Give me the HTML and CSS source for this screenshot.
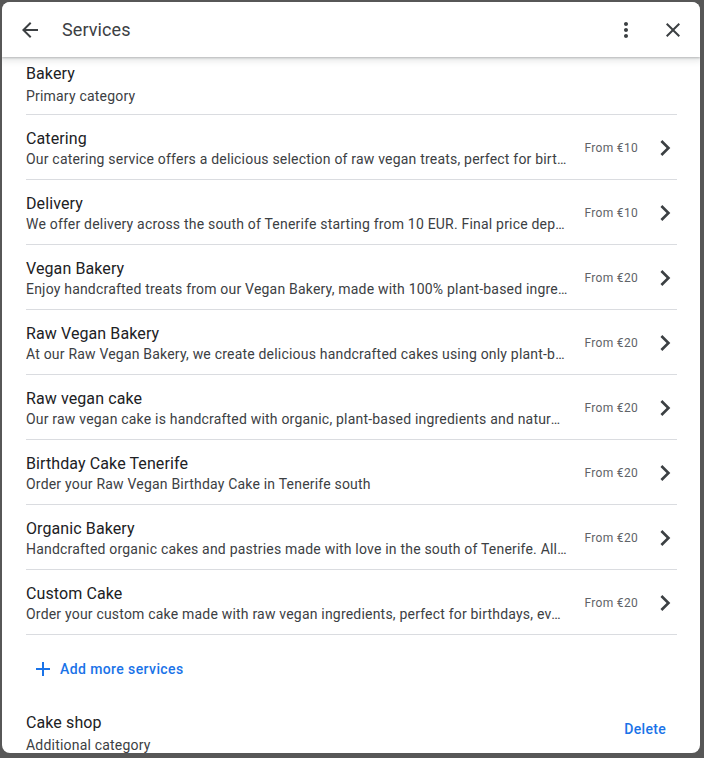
FILE: index.html
```html
<!DOCTYPE html>
<html lang="en">
<head>
<meta charset="utf-8">
<title>Services</title>
<link rel="stylesheet" href="styles.css">
</head>
<body>
<div class="dialog">
  <header class="header">
    <button class="icon-btn back" aria-label="Back">
      <svg viewBox="0 0 24 24" width="24" height="24"><path d="M20 11H7.83l5.59-5.59L12 4l-8 8 8 8 1.41-1.41L7.83 13H20v-2z"/></svg>
    </button>
    <h1 class="title">Services</h1>
    <div class="spacer"></div>
    <button class="icon-btn" aria-label="More">
      <svg viewBox="0 0 24 24" width="24" height="24"><path d="M12 8c1.1 0 2-.9 2-2s-.9-2-2-2-2 .9-2 2 .9 2 2 2zm0 2c-1.1 0-2 .9-2 2s.9 2 2 2 2-.9 2-2-.9-2-2-2zm0 6c-1.1 0-2 .9-2 2s.9 2 2 2 2-.9 2-2-.9-2-2-2z"/></svg>
    </button>
    <button class="icon-btn close" aria-label="Close">
      <svg viewBox="0 0 24 24" width="24" height="24"><path d="M19 6.41L17.59 5 12 10.59 6.41 5 5 6.41 10.59 12 5 17.59 6.41 19 12 13.41 17.59 19 19 17.59 13.41 12z"/></svg>
    </button>
  </header>

  <main class="content">
    <section class="category">
      <div class="cat-name">Bakery</div>
      <div class="cat-type">Primary category</div>
    </section>

    <ul class="services">
      <li class="service">
        <div class="svc-text">
          <div class="svc-name">Catering</div>
          <div class="svc-desc">Our catering service offers a delicious selection of raw vegan treats, perfect for birthdays, weddings and corporate events.</div>
        </div>
        <div class="svc-price">From €10</div>
        <svg class="chev" viewBox="0 0 24 24" width="32" height="32"><path d="M10 6L8.59 7.41 13.17 12l-4.58 4.59L10 18l6-6z"/></svg>
      </li>
      <li class="service">
        <div class="svc-text">
          <div class="svc-name">Delivery</div>
          <div class="svc-desc">We offer delivery across the south of Tenerife starting from 10 EUR. Final price depends on the distance.</div>
        </div>
        <div class="svc-price">From €10</div>
        <svg class="chev" viewBox="0 0 24 24" width="32" height="32"><path d="M10 6L8.59 7.41 13.17 12l-4.58 4.59L10 18l6-6z"/></svg>
      </li>
      <li class="service">
        <div class="svc-text">
          <div class="svc-name">Vegan Bakery</div>
          <div class="svc-desc">Enjoy handcrafted treats from our Vegan Bakery, made with 100% plant-based ingredients and lots of love.</div>
        </div>
        <div class="svc-price">From €20</div>
        <svg class="chev" viewBox="0 0 24 24" width="32" height="32"><path d="M10 6L8.59 7.41 13.17 12l-4.58 4.59L10 18l6-6z"/></svg>
      </li>
      <li class="service">
        <div class="svc-text">
          <div class="svc-name">Raw Vegan Bakery</div>
          <div class="svc-desc">At our Raw Vegan Bakery, we create delicious handcrafted cakes using only plant-based, organic ingredients.</div>
        </div>
        <div class="svc-price">From €20</div>
        <svg class="chev" viewBox="0 0 24 24" width="32" height="32"><path d="M10 6L8.59 7.41 13.17 12l-4.58 4.59L10 18l6-6z"/></svg>
      </li>
      <li class="service">
        <div class="svc-text">
          <div class="svc-name">Raw vegan cake</div>
          <div class="svc-desc">Our raw vegan cake is handcrafted with organic, plant-based ingredients and naturally sweetened.</div>
        </div>
        <div class="svc-price">From €20</div>
        <svg class="chev" viewBox="0 0 24 24" width="32" height="32"><path d="M10 6L8.59 7.41 13.17 12l-4.58 4.59L10 18l6-6z"/></svg>
      </li>
      <li class="service">
        <div class="svc-text">
          <div class="svc-name">Birthday Cake Tenerife</div>
          <div class="svc-desc">Order your Raw Vegan Birthday Cake in Tenerife south</div>
        </div>
        <div class="svc-price">From €20</div>
        <svg class="chev" viewBox="0 0 24 24" width="32" height="32"><path d="M10 6L8.59 7.41 13.17 12l-4.58 4.59L10 18l6-6z"/></svg>
      </li>
      <li class="service">
        <div class="svc-text">
          <div class="svc-name">Organic Bakery</div>
          <div class="svc-desc">Handcrafted organic cakes and pastries made with love in the south of Tenerife. All free from eggs and dairy.</div>
        </div>
        <div class="svc-price">From €20</div>
        <svg class="chev" viewBox="0 0 24 24" width="32" height="32"><path d="M10 6L8.59 7.41 13.17 12l-4.58 4.59L10 18l6-6z"/></svg>
      </li>
      <li class="service">
        <div class="svc-text">
          <div class="svc-name">Custom Cake</div>
          <div class="svc-desc">Order your custom cake made with raw vegan ingredients, perfect for birthdays, events and celebrations.</div>
        </div>
        <div class="svc-price">From €20</div>
        <svg class="chev" viewBox="0 0 24 24" width="32" height="32"><path d="M10 6L8.59 7.41 13.17 12l-4.58 4.59L10 18l6-6z"/></svg>
      </li>
    </ul>

    <button class="add-btn">
      <svg viewBox="0 0 24 24" width="24" height="24"><path d="M19 13h-6v6h-2v-6H5v-2h6V5h2v6h6v2z"/></svg>
      <span>Add more services</span>
    </button>

    <section class="category extra">
      <div class="cat-info">
        <div class="cat-name">Cake shop</div>
        <div class="cat-type">Additional category</div>
      </div>
      <button class="text-btn">Delete</button>
    </section>
  </main>
</div>
</body>
</html>
```

FILE: styles.css
```css
* { box-sizing: border-box; }

html, body {
  margin: 0;
  padding: 0;
  height: 100%;
}

body {
  background: #575757;
  font-family: Roboto, "Liberation Sans", Arial, sans-serif;
  color: #202124;
  overflow: hidden;
}

.dialog {
  margin: 2px 0 0 2px;
  width: 698px;
  height: 751px;
  background: #fff;
  border-radius: 8px;
  overflow: hidden;
  display: flex;
  flex-direction: column;
}

.header {
  height: 55px;
  flex: 0 0 55px;
  display: flex;
  align-items: center;
  padding: 0 15px 0 16px;
  background: #fff;
  box-shadow: 0 1px 2px rgba(60,64,67,.3), 0 2px 6px 2px rgba(60,64,67,.12);
  position: relative;
  z-index: 1;
}

.icon-btn {
  border: 0;
  background: none;
  padding: 0;
  width: 24px;
  height: 24px;
  display: flex;
  cursor: pointer;
}

.icon-btn svg { fill: #3c4043; }

.close { margin-left: 23px; }

.title {
  margin: 0 0 0 20px;
  font-size: 18px;
  font-weight: 400;
  color: #3c4043;
  line-height: 24px;
  letter-spacing: 0.1px;
}

.spacer { flex: 1; }

.content {
  flex: 1;
  padding: 6px 23px 0 24px;
  overflow: hidden;
}

.category {
  padding-bottom: 8px;
  border-bottom: 1px solid #dadce0;
}

.cat-name {
  font-size: 16px;
  line-height: 22px;
  color: #202124;
  letter-spacing: 0.1px;
}

.cat-type {
  margin-top: 1px;
  font-size: 14px;
  line-height: 20px;
  color: #3c4043;
  letter-spacing: 0.2px;
}

.services {
  list-style: none;
  margin: 0;
  padding: 0;
}

.service {
  display: flex;
  align-items: center;
  padding: 13px 0 10px;
  border-bottom: 1px solid #dadce0;
}

.svc-text {
  flex: 1;
  min-width: 0;
}

.svc-name {
  font-size: 16px;
  line-height: 21px;
  color: #202124;
  letter-spacing: 0.1px;
}

.svc-desc {
  font-size: 14px;
  line-height: 20px;
  color: #3c4043;
  letter-spacing: 0.2px;
  white-space: nowrap;
  overflow: hidden;
  text-overflow: ellipsis;
}

.svc-price {
  margin-left: 17px;
  font-size: 12px;
  color: #5f6368;
  letter-spacing: 0.3px;
  white-space: nowrap;
  position: relative;
  top: -1px;
}

.chev {
  margin-left: 11px;
  margin-right: -4px;
  flex: 0 0 32px;
  fill: #3c4043;
  position: relative;
  top: -1px;
}

.add-btn {
  display: flex;
  align-items: center;
  margin-top: 22px;
  padding: 0 0 0 5px;
  border: 0;
  background: none;
  color: #1a73e8;
  font-family: inherit;
  font-size: 14px;
  font-weight: 500;
  line-height: 24px;
  letter-spacing: 0.4px;
  cursor: pointer;
}

.add-btn svg {
  fill: #1a73e8;
  margin-right: 5px;
}

.extra {
  display: flex;
  align-items: flex-start;
  margin-top: 31px;
  border-bottom: 0;
}

.extra .cat-type { margin-top: 1px; }

.cat-info { flex: 1; }

.text-btn {
  margin-top: 6px;
  margin-right: 3px;
  padding: 0 8px;
  border: 0;
  background: none;
  color: #1a73e8;
  font-family: inherit;
  font-size: 14px;
  font-weight: 500;
  line-height: 22px;
  letter-spacing: 0.3px;
  cursor: pointer;
}
```
